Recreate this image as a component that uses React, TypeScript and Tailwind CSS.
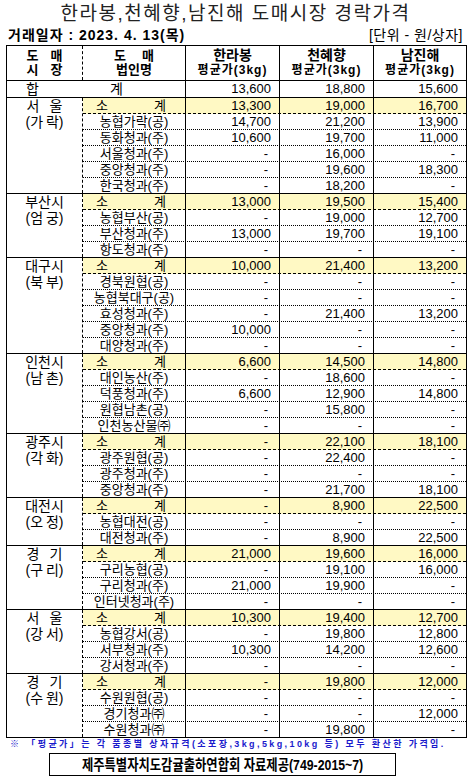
type Row = [string, string, string, string];

interface Section {
  city: string;
  area: [string, string];
  rows: Row[];
}

const total = ['13,600', '18,800', '15,600'];

const sections: Section[] = [
  {
    city: '서울',
    area: ['(가', '락)'],
    rows: [
      ['소계', '13,300', '19,000', '16,700'],
      ['농협가락(공)', '14,700', '21,200', '13,900'],
      ['동화청과(주)', '10,600', '19,700', '11,000'],
      ['서울청과(주)', '-', '16,000', '-'],
      ['중앙청과(주)', '-', '19,600', '18,300'],
      ['한국청과(주)', '-', '18,200', '-'],
    ],
  },
  {
    city: '부산시',
    area: ['(엄', '궁)'],
    rows: [
      ['소계', '13,000', '19,500', '15,400'],
      ['농협부산(공)', '-', '19,000', '12,700'],
      ['부산청과(주)', '13,000', '19,700', '19,100'],
      ['항도청과(주)', '-', '-', '-'],
    ],
  },
  {
    city: '대구시',
    area: ['(북', '부)'],
    rows: [
      ['소계', '10,000', '21,400', '13,200'],
      ['경북원협(공)', '-', '-', '-'],
      ['농협북대구(공)', '-', '-', '-'],
      ['효성청과(주)', '-', '21,400', '13,200'],
      ['중앙청과(주)', '10,000', '-', '-'],
      ['대양청과(주)', '-', '-', '-'],
    ],
  },
  {
    city: '인천시',
    area: ['(남', '촌)'],
    rows: [
      ['소계', '6,600', '14,500', '14,800'],
      ['대인농산(주)', '-', '18,600', '-'],
      ['덕풍청과(주)', '6,600', '12,900', '14,800'],
      ['원협남촌(공)', '-', '15,800', '-'],
      ['인천농산물㈜', '-', '-', '-'],
    ],
  },
  {
    city: '광주시',
    area: ['(각', '화)'],
    rows: [
      ['소계', '-', '22,100', '18,100'],
      ['광주원협(공)', '-', '22,400', '-'],
      ['광주청과(주)', '-', '-', '-'],
      ['중앙청과(주)', '-', '21,700', '18,100'],
    ],
  },
  {
    city: '대전시',
    area: ['(오', '정)'],
    rows: [
      ['소계', '-', '8,900', '22,500'],
      ['농협대전(공)', '-', '-', '-'],
      ['대전청과(주)', '-', '8,900', '22,500'],
    ],
  },
  {
    city: '경기',
    area: ['(구', '리)'],
    rows: [
      ['소계', '21,000', '19,600', '16,000'],
      ['구리농협(공)', '-', '19,100', '16,000'],
      ['구리청과(주)', '21,000', '19,900', '-'],
      ['인터넷청과(주)', '-', '-', '-'],
    ],
  },
  {
    city: '서울',
    area: ['(강', '서)'],
    rows: [
      ['소계', '10,300', '19,400', '12,700'],
      ['농협강서(공)', '-', '19,800', '12,800'],
      ['서부청과(주)', '10,300', '14,200', '12,600'],
      ['강서청과(주)', '-', '-', '-'],
    ],
  },
  {
    city: '경기',
    area: ['(수', '원)'],
    rows: [
      ['소계', '-', '19,800', '12,000'],
      ['수원원협(공)', '-', '-', '-'],
      ['경기청과㈜', '-', '-', '12,000'],
      ['수원청과㈜', '-', '19,800', '-'],
    ],
  },
];

function Num({ v, className }: { v: string; className: string }) {
  return (
    <div className={`${className} flex items-center justify-end ${v === '-' ? 'pr-[11px]' : 'pr-[8px]'}`}>
      {v}
    </div>
  );
}

function CityName({ city }: { city: string }) {
  if (city.length === 2) {
    return (
      <div className="flex w-[36px] justify-between">
        <span>{city[0]}</span>
        <span>{city[1]}</span>
      </div>
    );
  }
  return <div>{city}</div>;
}

function SectionBlock({ s, last }: { s: Section; last: boolean }) {
  return (
    <div className={`flex ${last ? '' : 'border-b border-black'}`}>
      <div className="w-[76px] shrink-0 border-r border-dashed border-black flex flex-col items-center text-[14px] leading-[16px]">
        <CityName city={s.city} />
        <div className="flex w-[38px] justify-between">
          <span>{s.area[0]}</span>
          <span>{s.area[1]}</span>
        </div>
      </div>
      <div className="flex-1 flex flex-col">
        {s.rows.map((r, i) => {
          const isLast = i === s.rows.length - 1;
          const isSub = i === 0;
          let rowCls = 'h-[16px] border-b border-dotted border-black';
          if (isLast) rowCls = 'h-[15px]';
          else if (isSub) rowCls = 'h-[16px] border-b border-dashed border-black';
          return (
            <div key={i} className={`flex leading-[15px] text-[13px] ${rowCls} ${isSub ? 'bg-[#fff9c4]' : ''}`}>
              {isSub ? (
                <div className="w-[103px] shrink-0 border-r border-black flex justify-between pl-[13px] pr-[19px]">
                  <span>소</span>
                  <span>계</span>
                </div>
              ) : (
                <div className="w-[103px] shrink-0 border-r border-black text-center whitespace-nowrap">{r[0]}</div>
              )}
              <Num v={r[1]} className="w-[94px] shrink-0 border-r border-black" />
              <Num v={r[2]} className="w-[94px] shrink-0 border-r border-black" />
              <Num v={r[3]} className="flex-1" />
            </div>
          );
        })}
      </div>
    </div>
  );
}

export default function App() {
  return (
    <div className="w-[471px] h-[780px] bg-white text-black overflow-hidden font-['Liberation_Sans','Noto_Sans_CJK_KR',sans-serif]">
      <div className="pt-[2px] text-center text-[19px] leading-[24px] tracking-[1.5px] text-[#222]">
        한라봉,천혜향,남진해 도매시장 경락가격
      </div>
      <div className="flex justify-between px-[8px] h-[19px] leading-[19px] text-[14px]">
        <span className="font-bold tracking-[1px]">거래일자 : 2023. 4. 13(목)</span>
        <span className="tracking-[0.5px]">[단위 - 원/상자]</span>
      </div>

      <div className="ml-[6px] w-[461px] border border-black">
        {/* header */}
        <div className="flex h-[35px] border-b border-black font-bold">
          <div className="w-[76px] shrink-0 border-r border-dashed border-black flex flex-col items-center justify-center text-[13px] leading-[14px]">
            <div className="flex w-[36px] justify-between"><span>도</span><span>매</span></div>
            <div className="flex w-[36px] justify-between"><span>시</span><span>장</span></div>
          </div>
          <div className="w-[103px] shrink-0 border-r border-black flex flex-col items-center justify-center text-[13px] leading-[14px]">
            <div className="flex w-[40px] justify-between"><span>도</span><span>매</span></div>
            <div>법인명</div>
          </div>
          {['한라봉', '천혜향', '남진해'].map((n, i) => (
            <div
              key={n}
              className={`${i < 2 ? 'w-[94px] shrink-0 border-r border-black' : 'flex-1'} flex flex-col items-center justify-center`}
            >
              <div className="text-[14px] leading-[15px]">{n}</div>
              <div className="text-[12px] leading-[15px] tracking-[1px] whitespace-nowrap">평균가(3kg)</div>
            </div>
          ))}
        </div>

        {/* total */}
        <div className="flex h-[17px] border-b border-black text-[13px] leading-[16px]">
          <div className="w-[179px] shrink-0 border-r border-black flex justify-between pl-[19px] pr-[62px] text-[14px]">
            <span>합</span>
            <span>계</span>
          </div>
          <Num v={total[0]} className="w-[94px] shrink-0 border-r border-black" />
          <Num v={total[1]} className="w-[94px] shrink-0 border-r border-black" />
          <Num v={total[2]} className="flex-1" />
        </div>

        {sections.map((s, i) => (
          <SectionBlock key={i} s={s} last={i === sections.length - 1} />
        ))}
      </div>

      <div className="pl-[10px] text-[9px] leading-[13px] font-bold tracking-[2.4px] text-[#1a1acc] whitespace-nowrap">
        ※ 「평균가」는 각 품종별 상자규격(소포장,3kg,5kg,10kg 등) 모두 환산한 가격임.
      </div>
      <div className="ml-[49px] mt-[2px] w-[347px] h-[23px] border border-black flex items-center justify-center">
        <span className="inline-block text-[15px] leading-[18px] font-bold scale-x-[0.82] whitespace-nowrap">
          제주특별자치도감귤출하연합회 자료제공(749-2015~7)
        </span>
      </div>
    </div>
  );
}
